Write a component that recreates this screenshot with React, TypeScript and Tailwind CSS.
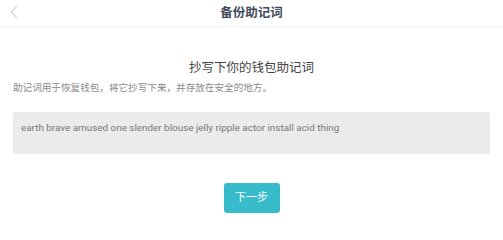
import { ChevronLeft } from 'lucide-react';

export default function App() {
  const words = 'earth brave amused one slender blouse jelly ripple actor install acid thing';

  return (
    <div className="w-[503px] h-[238px] bg-white font-['Roboto','Noto_Sans_CJK_SC',sans-serif]">
      {/* Header */}
      <div className="relative h-[27px] flex items-center justify-center border-b border-[#f3f3f3]">
        <ChevronLeft size={22} strokeWidth={1} className="absolute left-[3px] top-[1px] text-[#b5b5b5]" />
        <span className="text-[12.5px] font-bold text-[#3f4b5c]">备份助记词</span>
      </div>

      <div className="px-[13px]">
        <h2 className="mt-[32px] text-center text-[12.5px] leading-[18px] text-[#444]">抄写下你的钱包助记词</h2>
        <p className="mt-[5px] text-[9.6px] leading-[12px] text-[#8a8a8a]">
          助记词用于恢复钱包，将它抄写下来，并存放在安全的地方。
        </p>

        <div className="mt-[18px] h-[42px] rounded-[3px] bg-[#ebebeb] px-[8px] pt-[10px]">
          <div className="text-[9.9px] leading-[12px] text-[#787878]">{words}</div>
        </div>

        <div className="mt-[29px] flex justify-center">
          <button className="w-[56px] h-[30px] rounded-[3px] bg-[#38bbca] text-[11px] text-white">下一步</button>
        </div>
      </div>
    </div>
  );
}
